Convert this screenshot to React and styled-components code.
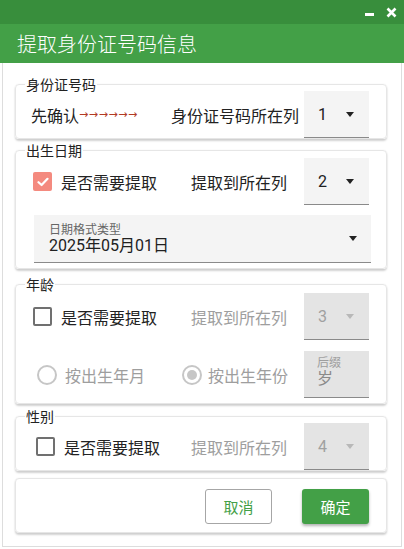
import React from 'react';
import styled, { createGlobalStyle } from 'styled-components';

const GlobalStyle = createGlobalStyle`
  html, body {
    margin: 0;
    padding: 0;
    background: #ffffff;
    font-family: "Noto Sans CJK SC", "Noto Sans", sans-serif;
  }
`;

const Window = styled.div`
  width: 404px;
  height: 549px;
  display: flex;
  flex-direction: column;
  background: #ffffff;
`;

const TitleBar = styled.div`
  height: 24px;
  background: #388e3c;
  display: flex;
  justify-content: flex-end;
  align-items: center;
  gap: 11px;
  padding-right: 7px;
`;

const Header = styled.div`
  height: 39px;
  background: #43a047;
  display: flex;
  align-items: center;
  padding-left: 17px;
  color: #ffffff;
  font-size: 20px;
  font-weight: 300;
  line-height: 1;
`;

const Body = styled.div`
  flex: 1;
  margin: 0 2px 2px;
  border: 1px solid #dddddd;
  border-top: none;
  padding: 14px 14px 0 12px;
  display: flex;
  flex-direction: column;
`;

const Card = styled.fieldset`
  margin: ${p => p.$mt || 0}px 0 0;
  padding: ${p => p.$pt || 0}px 17px ${p => p.$pb || 0}px 17px;
  border: 1px solid #e6e6e6;
  border-radius: 4px;
  box-shadow: 0 2px 2px rgba(0, 0, 0, 0.18), 0 0 1px rgba(0, 0, 0, 0.12);
  background: #ffffff;
  min-width: 0;
`;

const Legend = styled.legend`
  margin-left: -8px;
  padding: 0 1px;
  font-size: 14px;
  line-height: 14px;
  color: #222222;
`;

const Row = styled.div`
  display: grid;
  grid-template-columns: ${p => p.$cols};
  align-items: center;
  margin-top: ${p => p.$mt || 0}px;
`;

const Cell = styled.div`
  display: flex;
  align-items: center;
  gap: ${p => p.$gap || 9}px;
  padding-left: ${p => p.$pl || 0}px;
`;

const Text = styled.span`
  font-size: 16px;
  color: ${p => (p.$disabled ? '#9e9e9e' : '#222222')};
  white-space: nowrap;
`;

const Arrows = styled.span`
  font-family: "DejaVu Sans", sans-serif;
  font-size: 11px;
  color: #b23a24;
  letter-spacing: 0.6px;
  margin-left: -9px;
`;

const Check = styled.span`
  width: 19px;
  height: 19px;
  box-sizing: border-box;
  border-radius: 2px;
  flex-shrink: 0;
  display: flex;
  align-items: center;
  justify-content: center;
  background: ${p => (p.$checked ? '#f48a7f' : 'transparent')};
  border: ${p => (p.$checked ? 'none' : '2px solid #707070')};
`;

const Radio = styled.span`
  width: 20px;
  height: 20px;
  box-sizing: border-box;
  border-radius: 50%;
  border: 2px solid #c6c6c6;
  flex-shrink: 0;
  display: flex;
  align-items: center;
  justify-content: center;

  &::after {
    content: '';
    display: ${p => (p.$checked ? 'block' : 'none')};
    width: 10px;
    height: 10px;
    border-radius: 50%;
    background: #c6c6c6;
  }
`;

const SelectBox = styled.div`
  width: 65px;
  height: 47px;
  box-sizing: border-box;
  background: ${p => (p.$disabled ? '#e4e4e4' : '#f4f4f4')};
  border-bottom: 1px solid #8a8a8a;
  display: flex;
  align-items: center;
  justify-content: space-between;
  padding: 0 15px 0 14px;
  font-family: Roboto, "Noto Sans", sans-serif;
  font-size: 16px;
  color: ${p => (p.$disabled ? '#a0a0a0' : '#212121')};
`;

const Caret = styled.span`
  width: 0;
  height: 0;
  border-left: 4px solid transparent;
  border-right: 4px solid transparent;
  border-top: 5px solid ${p => (p.$disabled ? '#b8b8b8' : '#222222')};
`;

const DateField = styled.div`
  margin: 10px -2px 0 1px;
  height: 48px;
  box-sizing: border-box;
  background: #f4f4f4;
  border-bottom: 1px solid #8a8a8a;
  display: flex;
  align-items: center;
  justify-content: space-between;
  padding: 0 14px 0 15px;
`;

const FieldStack = styled.div`
  display: flex;
  flex-direction: column;
  justify-content: center;
`;

const FieldLabel = styled.span`
  font-size: 12px;
  line-height: 15px;
  color: ${p => (p.$disabled ? '#9e9e9e' : '#666666')};
`;

const FieldValue = styled.span`
  font-family: Roboto, "Noto Sans CJK SC", sans-serif;
  font-size: 16px;
  line-height: 20px;
  color: ${p => (p.$disabled ? '#8a8a8a' : '#212121')};
`;

const SuffixBox = styled.div`
  width: 65px;
  height: 47px;
  box-sizing: border-box;
  background: #e4e4e4;
  border-bottom: 1px solid #8a8a8a;
  padding: 3px 0 0 13px;
  display: flex;
  flex-direction: column;
`;

const ActionCard = styled.div`
  margin-top: 7px;
  border: 1px solid #e6e6e6;
  border-radius: 4px;
  box-shadow: 0 2px 2px rgba(0, 0, 0, 0.18), 0 0 1px rgba(0, 0, 0, 0.12);
  padding: 10px 17px 8px;
  display: flex;
  justify-content: flex-end;
  gap: 30px;
`;

const Button = styled.button`
  width: 67px;
  height: 35px;
  border-radius: 3px;
  font-family: "Noto Sans CJK SC", sans-serif;
  font-size: 15px;
  cursor: pointer;
  border: ${p => (p.$primary ? 'none' : '1px solid #a6a6a6')};
  background: ${p => (p.$primary ? '#43a047' : '#ffffff')};
  color: ${p => (p.$primary ? '#ffffff' : '#43a047')};
  box-shadow: ${p => (p.$primary ? '0 2px 3px rgba(0,0,0,0.3)' : 'none')};
`;

const CheckMark = () => (
  <svg width="12" height="10" viewBox="0 0 12 10">
    <path d="M1.5 5.2 L4.6 8 L10.5 1.8" fill="none" stroke="#fff" strokeWidth="2.2" strokeLinecap="round" strokeLinejoin="round" />
  </svg>
);

const Select = ({ value, disabled }) => (
  <SelectBox $disabled={disabled}>
    <span>{value}</span>
    <Caret $disabled={disabled} />
  </SelectBox>
);

export default function App() {
  return (
    <Window>
      <GlobalStyle />
      <TitleBar>
        <svg width="10" height="10" viewBox="0 0 10 10">
          <rect x="0" y="6" width="9" height="3" fill="#fff" />
        </svg>
        <svg width="11" height="11" viewBox="0 0 11 11">
          <path d="M1.5 1.5 L9.5 9.5 M9.5 1.5 L1.5 9.5" stroke="#fff" strokeWidth="2.6" />
        </svg>
      </TitleBar>
      <Header>提取身份证号码信息</Header>
      <Body>
        <Card>
          <Legend>身份证号码</Legend>
          <Row $cols="138px 1fr 65px">
            <Cell $gap={0} $pl={0}>
              <Text style={{ marginLeft: -2 }}>先确认</Text>
              <Arrows>→→→→→→</Arrows>
            </Cell>
            <Text>身份证号码所在列</Text>
            <Select value="1" />
          </Row>
        </Card>

        <Card $mt={4} $pt={1} $pb={5}>
          <Legend>出生日期</Legend>
          <Row $cols="158px 1fr 65px">
            <Cell>
              <Check $checked><CheckMark /></Check>
              <Text>是否需要提取</Text>
            </Cell>
            <Text>提取到所在列</Text>
            <Select value="2" />
          </Row>
          <DateField>
            <FieldStack>
              <FieldLabel>日期格式类型</FieldLabel>
              <FieldValue>2025年05月01日</FieldValue>
            </FieldStack>
            <Caret />
          </DateField>
        </Card>

        <Card $mt={8} $pt={2} $pb={5}>
          <Legend>年龄</Legend>
          <Row $cols="158px 1fr 65px">
            <Cell>
              <Check />
              <Text>是否需要提取</Text>
            </Cell>
            <Text $disabled>提取到所在列</Text>
            <Select value="3" disabled />
          </Row>
          <Row $cols="145px 1fr 65px" $mt={11}>
            <Cell $gap={8} $pl={4}>
              <Radio />
              <Text $disabled>按出生年月</Text>
            </Cell>
            <Cell $gap={6} $pl={4}>
              <Radio $checked />
              <Text $disabled>按出生年份</Text>
            </Cell>
            <SuffixBox>
              <FieldLabel $disabled>后缀</FieldLabel>
              <FieldValue $disabled>岁</FieldValue>
            </SuffixBox>
          </Row>
        </Card>

        <Card $mt={5}>
          <Legend>性别</Legend>
          <Row $cols="158px 1fr 65px">
            <Cell $pl={3}>
              <Check />
              <Text>是否需要提取</Text>
            </Cell>
            <Text $disabled>提取到所在列</Text>
            <Select value="4" disabled />
          </Row>
        </Card>

        <ActionCard>
          <Button>取消</Button>
          <Button $primary>确定</Button>
        </ActionCard>
      </Body>
    </Window>
  );
}
